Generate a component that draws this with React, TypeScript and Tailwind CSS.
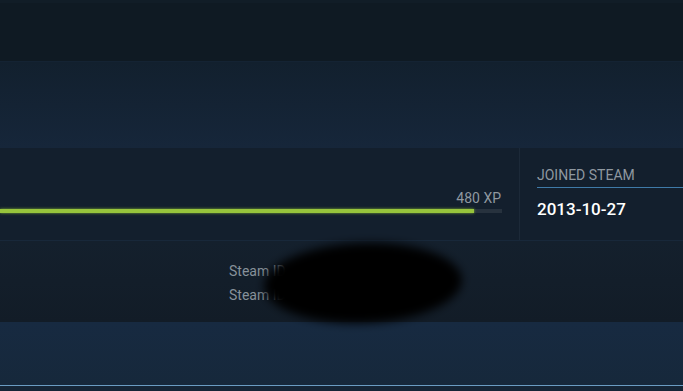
export default function App() {
  return (
    <div className="w-[683px] h-[391px] overflow-hidden bg-[#0f1a24] font-['Roboto','Liberation_Sans',sans-serif] flex flex-col">
      {/* top strip */}
      <div className="h-[61px] bg-[#0f1a23] border-t-[3px] border-[#111d27] shrink-0" />

      {/* header band */}
      <div className="h-[87px] bg-gradient-to-b from-[#12202e] to-[#16263a] border-t border-[#142333] shrink-0" />

      {/* level / joined row */}
      <div className="h-[92px] bg-[#131f2d] flex shrink-0">
        <div className="w-[520px] border-r border-[#1c2938] flex flex-col justify-end pb-[27px]">
          <div className="text-right text-[14px] leading-[16px] text-[#8f98a0] pr-[18px] mb-[3px]">480 XP</div>
          <div className="w-[502px] h-[4px] bg-[#27323e] flex">
            <div className="h-full bg-[#97c43c] shadow-[0_0_3px_#7fae34]" style={{ width: `${(474 / 502) * 100}%` }} />
          </div>
        </div>
        <div className="flex-1 pl-[17px] pt-[19px]">
          <div className="text-[14px] leading-[16px] uppercase text-[#8f98a0] pb-[4px] border-b border-[#3f7aa8]">Joined Steam</div>
          <div className="text-[17px] leading-[20px] font-medium text-white mt-[11px]">2013-10-27</div>
        </div>
      </div>

      {/* steam id row */}
      <div className="relative h-[82px] bg-gradient-to-b from-[#14202d] to-[#121c27] border-t border-[#18283a] shrink-0 pl-[229px] pt-[18px]">
        <div className="text-[14px] leading-[24px] text-[#87919a]">Steam ID</div>
        <div className="text-[14px] leading-[24px] text-[#87919a]">Steam ID</div>
        <div className="absolute left-[264px] top-[2px] w-[198px] h-[80px] rounded-[50%] bg-black blur-[5px] rotate-[-2deg]" />
      </div>

      {/* bottom band */}
      <div className="h-[63px] bg-gradient-to-b from-[#172a41] to-[#16283b] shrink-0" />
      <div className="h-px bg-[#6a9cc2] shrink-0" />
      <div className="flex-1 bg-[#152536]" />
    </div>
  );
}
